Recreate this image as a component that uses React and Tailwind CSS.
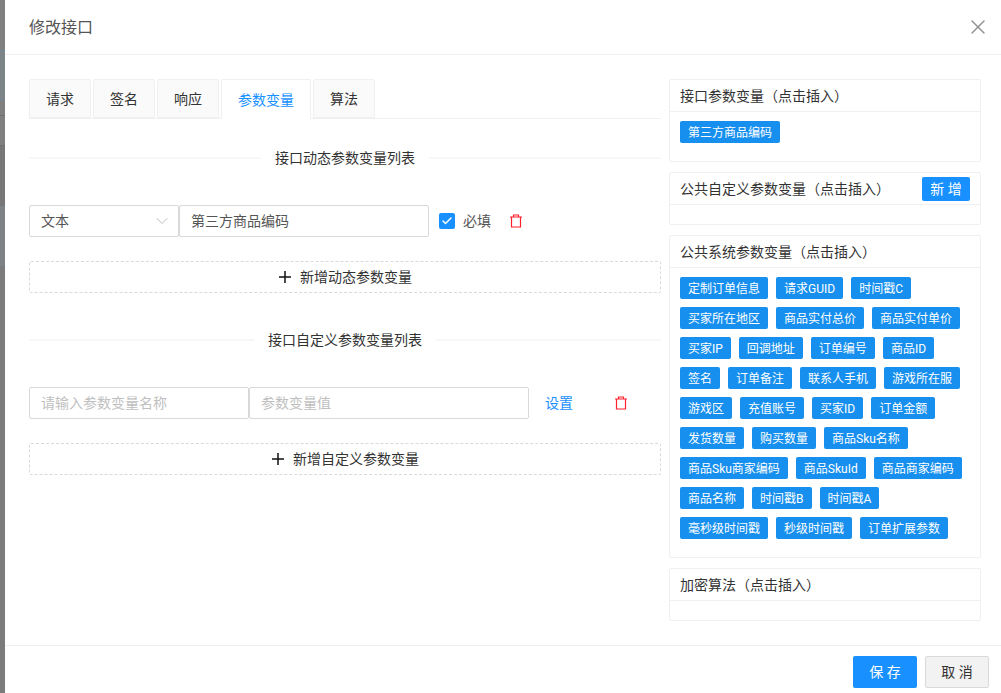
import { Check, ChevronDown, X } from 'lucide-react'

const font = "font-['Roboto','Noto_Sans_CJK_SC',sans-serif]"

const tabs = ['请求', '签名', '响应', '参数变量', '算法']

const systemVars = [
  '定制订单信息', '请求GUID', '时间戳C', '买家所在地区', '商品实付总价', '商品实付单价',
  '买家IP', '回调地址', '订单编号', '商品ID', '签名', '订单备注', '联系人手机', '游戏所在服',
  '游戏区', '充值账号', '买家ID', '订单金额', '发货数量', '购买数量', '商品Sku名称',
  '商品Sku商家编码', '商品SkuId', '商品商家编码', '商品名称', '时间戳B', '时间戳A',
  '毫秒级时间戳', '秒级时间戳', '订单扩展参数',
]

function TrashIcon() {
  return (
    <svg width="14" height="14" viewBox="0 0 14 14" fill="none" stroke="#ff1f2d" strokeWidth="1.2">
      <path d="M1 3h12M2.5 3v10h9V3M4.5 3V1h5v2" />
    </svg>
  )
}

function PlusIcon() {
  return (
    <svg width="14" height="14" viewBox="0 0 14 14" fill="none" stroke="#111" strokeWidth="1.5">
      <path d="M7 1v12M1 7h12" />
    </svg>
  )
}

function Divider({ children }) {
  return (
    <div className="flex items-center gap-[14px] h-5 text-sm text-[#333]">
      <div className="flex-1 h-0.5 bg-[#f7f7f7]" />
      <span>{children}</span>
      <div className="flex-1 h-0.5 bg-[#f7f7f7]" />
    </div>
  )
}

function AddButton({ children }) {
  return (
    <div className="h-8 flex items-center justify-center gap-2 border border-dashed border-[#d9d9d9] rounded-[2px] text-sm text-[#333]">
      <PlusIcon />
      <span>{children}</span>
    </div>
  )
}

function Tag({ children }) {
  return <span className="h-[22px] px-2 pt-px flex items-center rounded-[2px] bg-[#168fee] text-xs text-white whitespace-nowrap">{children}</span>
}

function Card({ title, action, className, children }) {
  return (
    <div className={`border border-[#f0f0f0] rounded-[2px] ${className}`}>
      <div className="h-8 px-[10px] flex items-center justify-between border-b border-[#f0f0f0] text-sm text-[#333]">
        <span>{title}</span>
        {action}
      </div>
      {children}
    </div>
  )
}

export default function App() {
  return (
    <div className={`w-[1001px] h-[693px] flex overflow-hidden ${font}`}>
      <div className="w-[5px] flex flex-col bg-[#808080]">
        <div className="h-[50px]" />
        <div className="h-[50px] border-y border-[#6d8798] bg-[#7c8488]" />
        <div className="h-[15px]" />
        <div className="h-[31px] border-y border-[#6e6e6e]" />
        <div className="h-[60px] bg-[#777]" />
        <div className="h-[60px] bg-[#7c8286]" />
        <div className="flex-1 bg-[#7b7b7b]" />
      </div>
      <div className="flex-1 flex flex-col bg-white">
        <div className="h-[55px] shrink-0 pl-6 pr-[11px] flex items-center justify-between border-b border-[#efefef]">
          <span className="text-base text-[#555] translate-y-px">修改接口</span>
          <X size={24} strokeWidth={1.4} className="text-[#909090]" />
        </div>

        <div className="flex-1 pt-6 pl-6 pr-5 flex gap-2">
          <div className="w-[632px]">
            <div className="flex gap-0.5 h-10 border-b border-[#f0f0f0]">
              {tabs.map((tab) => (
                <div
                  key={tab}
                  className={
                    tab === '参数变量'
                      ? 'h-10 px-4 flex items-center border border-b-0 border-[#f0f0f0] rounded-t-[2px] bg-white text-sm text-[#1890ff]'
                      : 'h-[39px] px-4 flex items-center border border-[#f0f0f0] rounded-t-[2px] bg-[#fafafa] text-sm text-[#333]'
                  }
                >
                  {tab}
                </div>
              ))}
            </div>

            <div className="mt-[29px]">
              <Divider>接口动态参数变量列表</Divider>
            </div>

            <div className="mt-[37px] flex items-center h-8">
              <div className="w-[150px] h-8 pl-[11px] pr-3 flex items-center justify-between border border-[#d9d9d9] rounded-[2px] text-sm text-[#555]">
                <span>文本</span>
                <ChevronDown size={20} strokeWidth={1} className="text-[#b0b0b0] -mr-[6px]" />
              </div>
              <div className="w-[250px] h-8 px-[11px] flex items-center border border-[#d9d9d9] rounded-[2px] text-sm text-[#555]">第三方商品编码</div>
              <div className="ml-[10px] w-4 h-4 flex items-center justify-center rounded-[2px] bg-[#1890ff]">
                <Check size={12} strokeWidth={3} className="text-white" />
              </div>
              <span className="ml-2 text-sm text-[#555]">必填</span>
              <div className="ml-[18px] flex"><TrashIcon /></div>
            </div>

            <div className="mt-6">
              <AddButton>新增动态参数变量</AddButton>
            </div>

            <div className="mt-[37px]">
              <Divider>接口自定义参数变量列表</Divider>
            </div>

            <div className="mt-[37px] flex items-center h-8">
              <div className="w-[220px] h-8 px-[11px] flex items-center border border-[#d9d9d9] rounded-[2px] text-sm text-[#bfbfbf]">请输入参数变量名称</div>
              <div className="w-[280px] h-8 px-[11px] flex items-center border border-[#d9d9d9] rounded-[2px] text-sm text-[#bfbfbf]">参数变量值</div>
              <span className="ml-4 text-sm text-[#1890ff]">设置</span>
              <div className="ml-[41px] flex"><TrashIcon /></div>
            </div>

            <div className="mt-6">
              <AddButton>新增自定义参数变量</AddButton>
            </div>
          </div>

          <div className="w-[312px] flex flex-col gap-[10px]">
            <Card title="接口参数变量（点击插入）" className="h-[83px]">
              <div className="pt-[9px] pl-[10px] flex">
                <Tag>第三方商品编码</Tag>
              </div>
            </Card>
            <Card
              title="公共自定义参数变量（点击插入）"
              className="h-[53px]"
              action={<span className="h-6 w-12 flex items-center justify-center rounded-[2px] bg-[#1890ff] text-sm text-white">新 增</span>}
            />
            <Card title="公共系统参数变量（点击插入）" className="h-[323px]">
              <div className="pt-[9px] pl-[10px] pr-2 flex flex-wrap gap-2">
                {systemVars.map((name) => (
                  <Tag key={name}>{name}</Tag>
                ))}
              </div>
            </Card>
            <Card title="加密算法（点击插入）" className="h-[53px]" />
          </div>
        </div>

        <div className="h-[48px] shrink-0 pt-[10px] pr-3 flex items-start justify-end gap-2 border-t border-[#efefef]">
          <span className="w-16 h-8 flex items-center justify-center rounded-[2px] bg-[#1890ff] text-sm text-white">保 存</span>
          <span className="w-16 h-8 flex items-center justify-center rounded-[2px] border border-[#d9d9d9] bg-[#f2f2f2] text-sm text-[#333]">取 消</span>
        </div>
      </div>
    </div>
  )
}
